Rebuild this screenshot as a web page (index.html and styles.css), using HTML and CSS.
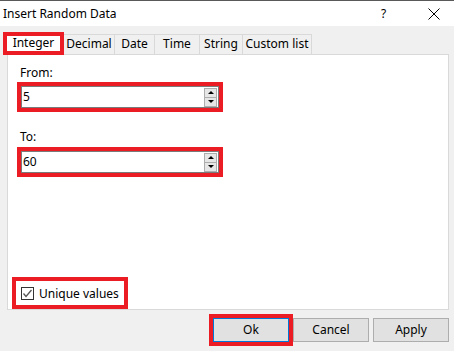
FILE: index.html
```html
<!DOCTYPE html>
<html lang="en">
<head>
    <meta charset="UTF-8">
    <title>Insert Random Data</title>
    <link rel="stylesheet" href="styles.css">
</head>
<body>

<div class="titlebar">
    <span class="title">Insert Random Data</span>
    <span class="help">?</span>
    <svg class="close" viewBox="0 0 12 12">
        <line x1="0.5" y1="0.5" x2="11.5" y2="11.5"/>
        <line x1="11.5" y1="0.5" x2="0.5" y2="11.5"/>
    </svg>
</div>

<div class="tabs">
    <div class="tab active">Integer</div>
    <div class="tab tab-decimal">Decimal</div>
    <div class="tab tab-date">Date</div>
    <div class="tab tab-time">Time</div>
    <div class="tab tab-string">String</div>
    <div class="tab tab-custom">Custom list</div>
</div>

<div class="panel">
    <div class="field-label">From:</div>
    <div class="spin marked">
        <span class="spin-value">5</span>
        <div class="spin-buttons">
            <div class="spin-btn"><span class="arrow-up"></span></div>
            <div class="spin-btn"><span class="arrow-down"></span></div>
        </div>
    </div>

    <div class="field-label label-to">To:</div>
    <div class="spin marked spin-to">
        <span class="spin-value">60</span>
        <div class="spin-buttons">
            <div class="spin-btn"><span class="arrow-up"></span></div>
            <div class="spin-btn"><span class="arrow-down"></span></div>
        </div>
    </div>

    <label class="check marked">
        <span class="check-box">
            <svg viewBox="0 0 11 11"><polyline points="1.5,5.5 4,8.5 9.5,2"/></svg>
        </span>
        Unique values
    </label>
</div>

<div class="buttons">
    <div class="button button-default marked">Ok</div>
    <div class="button">Cancel</div>
    <div class="button">Apply</div>
</div>

</body>
</html>
```

FILE: styles.css
```css
body {
    margin: 0;
    width: 454px;
    height: 351px;
    background-color: #f0f0f0;
    font-family: 'Noto Sans', sans-serif;
    font-size: 12px;
    color: #000;
    overflow: hidden;
}
.marked {
    outline: 4px solid #ec1c24;
}

/* title bar */
.titlebar {
    display: flex;
    align-items: center;
    height: 25px;
    background-color: #fff;
    border-top: 1px solid #595959;
}
.title {
    padding-left: 3px;
    flex: 1;
}
.help {
    width: 10px;
    margin-right: 37px;
}
.close {
    width: 12px;
    height: 12px;
    margin-right: 14px;
    stroke: #000;
    stroke-width: 1;
}

/* tabs */
.tabs {
    display: flex;
    align-items: flex-end;
    height: 22px;
    padding: 6px 0 0 3px;
    position: relative;
    z-index: 1;
}
.tab {
    box-sizing: border-box;
    height: 20px;
    line-height: 18px;
    text-align: center;
    border-top: 1px solid #d9d9d9;
    border-right: 1px solid #d9d9d9;
}
.tab.active {
    width: 61px;
    height: 23px;
    margin-bottom: -1px;
    line-height: 14px;
    background-color: #fff;
    border: 4px solid #ec1c24;
}
.tab-decimal { width: 51px; }
.tab-date { width: 40px; }
.tab-time { width: 45px; }
.tab-string { width: 43px; }
.tab-custom { width: 69px; }

/* panel */
.panel {
    box-sizing: border-box;
    display: flex;
    flex-direction: column;
    align-items: flex-start;
    width: 442px;
    height: 256px;
    margin-left: 7px;
    padding: 10px 0 0 12px;
    background-color: #fff;
    border: 1px solid #d9d9d9;
}
.field-label {
    line-height: 16px;
}
.label-to {
    margin-top: 21px;
}
.spin {
    box-sizing: border-box;
    display: flex;
    align-items: center;
    width: 198px;
    height: 22px;
    margin: 5px 0 0 1px;
    padding-left: 1px;
    border: 1px solid #7a7a7a;
}
.spin-to {
    margin-top: 6px;
}
.spin-value {
    flex: 1;
    line-height: 20px;
}
.spin-buttons {
    display: flex;
    flex-direction: column;
    gap: 0;
    margin-right: 1px;
}
.spin-btn {
    box-sizing: border-box;
    display: flex;
    align-items: center;
    justify-content: center;
    width: 13px;
    height: 10px;
    background-color: #e6e6e6;
    border: 1px solid #adadad;
}
.spin-btn + .spin-btn {
    border-top: none;
    height: 9px;
}
.arrow-up, .arrow-down {
    width: 0;
    height: 0;
    border-left: 3px solid transparent;
    border-right: 3px solid transparent;
}
.arrow-up {
    border-bottom: 3px solid #000;
}
.arrow-down {
    border-top: 3px solid #000;
}

/* checkbox */
.check {
    display: flex;
    align-items: center;
    gap: 5px;
    height: 24px;
    margin: auto 0 4px -4px;
    padding: 0 5px;
}
.check-box {
    box-sizing: border-box;
    width: 13px;
    height: 13px;
    border: 1px solid #333;
    background-color: #fff;
}
.check-box svg {
    display: block;
    width: 11px;
    height: 11px;
    fill: none;
    stroke: #555;
    stroke-width: 1.3;
}

/* dialog buttons */
.buttons {
    display: flex;
    justify-content: flex-end;
    gap: 4px;
    padding: 8px 5px 0 0;
}
.button {
    box-sizing: border-box;
    width: 76px;
    height: 24px;
    line-height: 22px;
    text-align: center;
    background-color: #e1e1e1;
    border: 1px solid #adadad;
}
.button-default {
    border-color: #0078d7;
}
```
